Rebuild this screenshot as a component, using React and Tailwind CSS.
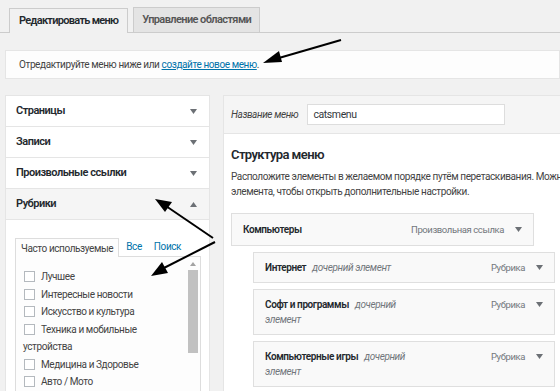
import React from 'react';

const font = { fontFamily: 'Roboto, "Open Sans", sans-serif' };

function Caret({ up }) {
  return (
    <svg width="7" height="5" viewBox="0 0 7 5" className="shrink-0">
      <path d={up ? 'M0 5 L3.5 0 L7 5 Z' : 'M0 0 L7 0 L3.5 5 Z'} fill="#6c7075" />
    </svg>
  );
}

function AccRow({ title, open }) {
  return (
    <div className={`h-[31px] flex items-center justify-between pl-[10px] pr-[12px] border-b border-[#e5e5e5] ${open ? 'bg-[#f5f5f5]' : 'bg-white'}`}>
      <span className="text-[11px] font-semibold tracking-[-0.5px] text-[#23282d]">{title}</span>
      <Caret up={open} />
    </div>
  );
}

function Box() {
  return <span className="mt-[3px] w-[11px] h-[11px] shrink-0 border border-[#b4b9be] bg-white" />;
}

function Check({ label }) {
  return (
    <div className="flex items-start gap-[6px]">
      <Box />
      <span>{label}</span>
    </div>
  );
}

function Item({ title, type, child }) {
  return (
    <div className={`${child ? 'ml-[22px] w-[302px] py-[7px]' : 'w-[303px] py-[8px]'} border border-[#dfdfdf] bg-[#f9f9f9] flex justify-between items-start pl-[11px] pr-[11px]`}>
      <div className={`text-[10px] leading-[15px] text-[#23282d] ${child ? 'w-[160px]' : ''}`}>
        <b className="font-semibold">{title}</b>
        {child && <i className="text-[#72777c] ml-[6px]">дочерний элемент</i>}
      </div>
      <div className="flex items-center gap-[11px] text-[9.5px] leading-[15px] text-[#72777c] whitespace-nowrap">
        <span>{type}</span>
        <Caret />
      </div>
    </div>
  );
}

export default function App() {
  return (
    <div className="relative w-[560px] h-[391px] overflow-hidden bg-[#f1f1f1] text-[#444] tracking-[-0.4px]" style={font}>
      {/* tabs */}
      <div className="flex items-end gap-[5px] pl-[9px] pt-[7px] border-b border-[#ccc]">
        <div className="h-[25px] px-[9px] flex items-center border border-b-0 border-[#ccc] bg-[#f1f1f1] -mb-px text-[11px] font-semibold tracking-[-0.7px] text-[#23282d]">
          Редактировать меню
        </div>
        <div className="h-[25px] px-[8px] flex items-center border border-b-0 border-[#ccc] bg-[#e4e4e4] text-[11px] font-semibold tracking-[-0.6px] text-[#555]">
          Управление областями
        </div>
      </div>

      {/* notice */}
      <div className="mt-[17px] ml-[5px] h-[29px] bg-[#fdfdfd] border border-[#e5e5e5] flex items-center pl-[13px] text-[10px] text-[#444]">
        Отредактируйте меню ниже или&nbsp;<span className="text-[#0073aa] underline">создайте новое меню</span>.
      </div>

      {/* columns */}
      <div className="mt-[16px] flex gap-[13px] pl-[5px]">
        <div className="w-[205px] shrink-0 border border-[#e5e5e5] bg-white">
          <AccRow title="Страницы" />
          <AccRow title="Записи" />
          <AccRow title="Произвольные ссылки" />
          <AccRow title="Рубрики" open />
          <div className="pt-[17px] pl-[9px] pr-[8px]">
            <div className="flex items-end text-[10px] border-b border-[#ddd] whitespace-nowrap">
              <span className="px-[5px] h-[19px] flex items-center border border-b-0 border-[#ddd] bg-[#fdfdfd] -mb-px text-[#444]">Часто используемые</span>
              <span className="pl-[7px] pr-[12px] h-[19px] flex items-center text-[#0073aa]">Все</span>
              <span className="h-[19px] flex items-center text-[#0073aa]">Поиск</span>
            </div>
            <div className="relative border border-t-0 border-[#ddd] bg-[#fdfdfd] pl-[8px] pr-[16px] pt-[11px] text-[10px] leading-[17.5px] text-[#444] h-[140px]">
              <Check label="Лучшее" />
              <Check label="Интересные новости" />
              <Check label="Искусство и культура" />
              <Check label="Техника и мобильные" />
              <div className="-ml-[1px]">устройства</div>
              <Check label="Медицина и Здоровье" />
              <Check label="Авто / Мото" />
              {/* scrollbar */}
              <svg className="absolute right-[4px] top-[5px]" width="6" height="4" viewBox="0 0 6 4"><path d="M0 4 L3 0 L6 4 Z" fill="#a3a3a3" /></svg>
              <div className="absolute right-[2px] top-[13px] w-[10px] h-[83px] bg-[#c1c1c1]" />
            </div>
          </div>
        </div>

        <div className="flex-1 border border-r-0 border-[#e5e5e5] bg-white">
          <div className="h-[38px] bg-[#f5f5f5] border-b border-[#e5e5e5] flex items-center pl-[7px]">
            <span className="italic text-[10px] text-[#444] mr-[9px] whitespace-nowrap">Название меню</span>
            <div className="w-[198px] h-[21px] bg-white border border-[#ddd] flex items-center pl-[5px] text-[10.5px] text-[#32373c]">catsmenu</div>
          </div>
          <div className="pl-[7px] pt-[12px]">
            <div className="text-[13px] font-semibold tracking-[-0.6px] text-[#23282d] leading-[18px]">Структура меню</div>
            <div className="mt-[5px] text-[10px] leading-[15px] text-[#444] whitespace-nowrap">
              Расположите элементы в желаемом порядке путём перетаскивания. Можно также щёлкнуть на стрелку справа от<br />
              элемента, чтобы открыть дополнительные настройки.
            </div>
            <div className="mt-[14px] flex flex-col gap-[6px]">
              <Item title="Компьютеры" type="Произвольная ссылка" />
              <Item title="Интернет" type="Рубрика" child />
              <Item title="Софт и программы" type="Рубрика" child />
              <Item title="Компьютерные игры" type="Рубрика" child />
            </div>
          </div>
        </div>
      </div>

      {/* annotation arrows */}
      <svg className="absolute inset-0 pointer-events-none" width="560" height="391">
        <g stroke="#000" strokeWidth="2" fill="none">
          <line x1="341" y1="40" x2="272" y2="60" />
          <line x1="213" y1="238" x2="163" y2="204" />
          <line x1="215" y1="242" x2="158" y2="271" />
        </g>
        <path d="M263 63 L279 51 L282 62 Z" fill="#000" />
        <path d="M155 199 L172 202 L165 212 Z" fill="#000" />
        <path d="M151 276 L162 262 L168 273 Z" fill="#000" />
      </svg>
    </div>
  );
}
